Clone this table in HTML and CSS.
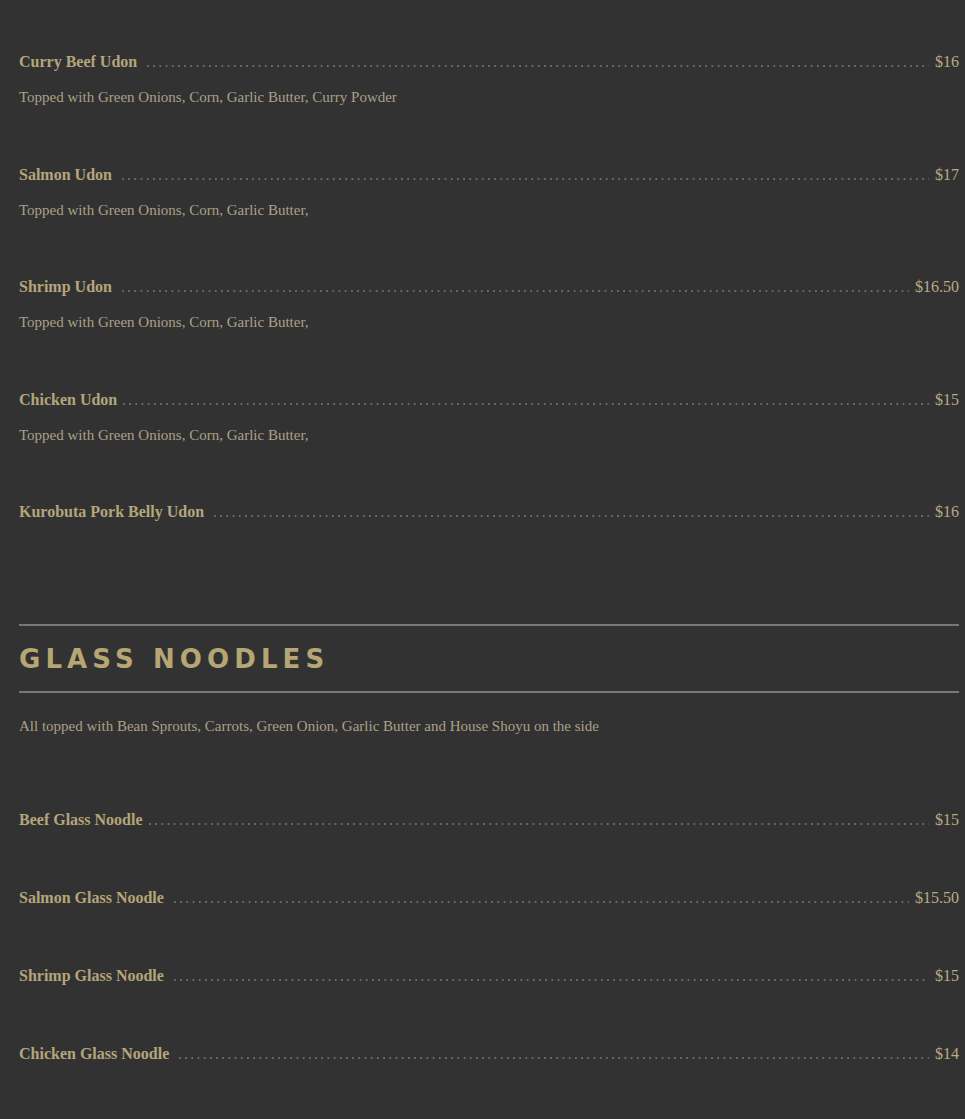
FILE: index.html
```html
<!DOCTYPE html>
<html lang="en">
<head>
<meta charset="utf-8">
<title>Menu</title>
<link rel="stylesheet" href="styles.css">
</head>
<body>
<main class="menu">
  <section class="list list-udon">
    <div class="item">
      <div class="row"><span class="name">Curry Beef Udon</span><span class="leader"></span><span class="price">$16</span></div>
      <p class="desc">Topped with Green Onions, Corn, Garlic Butter, Curry Powder</p>
    </div>
    <div class="item">
      <div class="row"><span class="name">Salmon Udon</span><span class="leader"></span><span class="price">$17</span></div>
      <p class="desc">Topped with Green Onions, Corn, Garlic Butter,</p>
    </div>
    <div class="item">
      <div class="row"><span class="name">Shrimp Udon</span><span class="leader"></span><span class="price">$16.50</span></div>
      <p class="desc">Topped with Green Onions, Corn, Garlic Butter,</p>
    </div>
    <div class="item">
      <div class="row"><span class="name">Chicken Udon</span><span class="leader tight"></span><span class="price">$15</span></div>
      <p class="desc">Topped with Green Onions, Corn, Garlic Butter,</p>
    </div>
    <div class="item">
      <div class="row"><span class="name">Kurobuta Pork Belly Udon</span><span class="leader"></span><span class="price">$16</span></div>
    </div>
  </section>

  <section class="section">
    <header class="section-head">
      <h2 class="section-title">GLASS NOODLES</h2>
    </header>
    <p class="intro">All topped with Bean Sprouts, Carrots, Green Onion, Garlic Butter and House Shoyu on the side</p>
    <div class="list list-glass">
      <div class="item">
        <div class="row"><span class="name">Beef Glass Noodle</span><span class="leader tight"></span><span class="price">$15</span></div>
      </div>
      <div class="item">
        <div class="row"><span class="name">Salmon Glass Noodle</span><span class="leader"></span><span class="price">$15.50</span></div>
      </div>
      <div class="item">
        <div class="row"><span class="name">Shrimp Glass Noodle</span><span class="leader"></span><span class="price">$15</span></div>
      </div>
      <div class="item">
        <div class="row"><span class="name">Chicken Glass Noodle</span><span class="leader"></span><span class="price">$14</span></div>
      </div>
    </div>
  </section>
</main>
</body>
</html>
```

FILE: styles.css
```css
html, body {
  margin: 0;
  padding: 0;
  background: #323232;
}

body {
  font-family: "Liberation Serif", "Times New Roman", serif;
  color: #b3a57c;
}

.menu {
  padding: 50px 6px 0 19px;
  display: flex;
  flex-direction: column;
}

.list {
  display: flex;
  flex-direction: column;
  gap: 53.5px;
}

.item {
  display: flex;
  flex-direction: column;
}

.row {
  display: flex;
  align-items: center;
  height: 24px;
  line-height: 24px;
}

.name {
  font-size: 16px;
  font-weight: bold;
  color: #b4a57a;
  white-space: nowrap;
}

.price {
  font-size: 16px;
  color: #b8ab85;
  white-space: nowrap;
}

.leader {
  flex: 1;
  align-self: stretch;
  margin: 0 6px 0 10px;
  background-image: linear-gradient(to right, #6a6a6a 2px, transparent 2px);
  background-size: 6.2px 2px;
  background-repeat: space no-repeat;
  background-position: 0 15px;
}

.leader.tight {
  margin-left: 6px;
}

.desc {
  margin: 11px 0 0;
  font-size: 15px;
  line-height: 24px;
  color: #aaa088;
}

.section {
  margin-top: 100px;
  display: flex;
  flex-direction: column;
}

.section-head {
  border-top: 2px solid #787878;
  border-bottom: 2px solid #787878;
  height: 65px;
  display: flex;
  align-items: center;
}

.section-title {
  margin: 0;
  font-family: "DejaVu Sans", "Liberation Sans", sans-serif;
  font-weight: bold;
  font-size: 26px;
  letter-spacing: 5.1px;
  color: #b5a674;
  line-height: 1;
}

.intro {
  margin: 21px 0 0;
  font-size: 15px;
  line-height: 24px;
  color: #aaa088;
}

.list-glass {
  margin-top: 70px;
  gap: 54px;
}
```
